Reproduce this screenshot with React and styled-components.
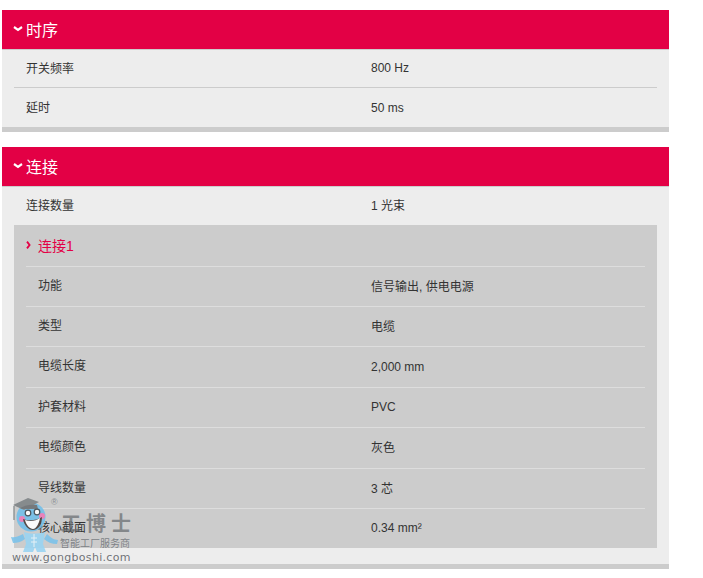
import styled, { createGlobalStyle } from 'styled-components'

const GlobalStyle = createGlobalStyle`
  html, body {
    margin: 0;
    padding: 0;
    background: #fff;
    font-family: "Liberation Sans", "Noto Sans CJK SC", sans-serif;
  }
  * {
    box-sizing: border-box;
  }
`

const Page = styled.div`
  position: relative;
  width: 703px;
  height: 578px;
  overflow: hidden;
  padding: 10px 34px 0 2px;
`

const Section = styled.section`
  background: #ededed;
  border-bottom: 5px solid #ccc;
  margin-bottom: 15px;
`

const Header = styled.h2`
  display: flex;
  align-items: center;
  gap: 3px;
  height: 40px;
  margin: 0;
  padding: 0 0 2px 11px;
  background: #e30045;
  border-bottom: 1px solid #ccc;
  color: #fff;
  font-size: 16px;
  font-weight: 400;
`

const Row = styled.div`
  display: flex;
  align-items: center;
  height: ${(p) => p.$h}px;
  margin: 0 12px;
  padding: 0 0 ${(p) => p.$pad ?? 2}px 12px;
  font-size: 12px;
  color: #333;
  border-bottom: ${(p) => (p.$line ? '1px solid #ccc' : 'none')};
`

const Label = styled.span`
  width: 345px;
  flex: none;
`

const Value = styled.span`
  padding-top: ${(p) => (p.$latin ? 2 : 0)}px;
`

const Nested = styled.div`
  background: #ccc;
  margin: 0 12px 16px;
`

const NestedTitle = styled.div`
  display: flex;
  align-items: center;
  gap: 7px;
  height: 42px;
  margin: 0 12px;
  padding-bottom: 2px;
  border-bottom: 1px solid #ddd;
  color: #e30045;
  font-size: 14px;
`

const NestedRow = styled.div`
  display: flex;
  align-items: center;
  height: ${(p) => p.$h}px;
  margin: 0 12px;
  padding: 0 0 3px 12px;
  border-bottom: ${(p) => (p.$last ? 'none' : '1px solid #ddd')};
  font-size: 12px;
  color: #333;
`

const NestedLabel = styled.span`
  width: 333px;
  flex: none;
  padding-bottom: 2px;
`

const Watermark = styled.div`
  position: absolute;
  left: 10px;
  top: 496px;
  width: 125px;
  height: 72px;
  pointer-events: none;
`

const BrandName = styled.div`
  position: absolute;
  left: 51px;
  top: 13px;
  font-family: "Noto Sans CJK SC", sans-serif;
  font-size: 20px;
  font-weight: 700;
  letter-spacing: 5px;
  line-height: 28px;
  white-space: nowrap;
  color: rgba(100, 104, 108, 0.7);
`

const BrandTag = styled.div`
  position: absolute;
  left: 50px;
  top: 41px;
  font-family: "Noto Sans CJK SC", sans-serif;
  font-size: 10px;
  line-height: 12px;
  white-space: nowrap;
  color: rgba(110, 115, 120, 0.85);
`

const BrandUrl = styled.div`
  position: absolute;
  left: 2px;
  top: 55px;
  font-family: "DejaVu Sans", sans-serif;
  font-size: 11px;
  line-height: 14px;
  letter-spacing: 0.3px;
  white-space: nowrap;
  color: rgba(95, 100, 105, 0.9);
`

const Registered = styled.div`
  position: absolute;
  left: 41px;
  top: 1px;
  font-size: 9px;
  line-height: 10px;
  color: rgba(120, 125, 130, 0.8);
`

const MascotSvg = styled.svg`
  position: absolute;
  left: 0;
  top: 0;
  opacity: 0.9;
`

const Chevron = () => (
  <svg width="10" height="6" viewBox="0 0 10 6">
    <path d="M1 1l4 2.8L9 1" fill="none" stroke="#fff" strokeWidth="2.2" />
  </svg>
)

const SmallChevron = () => (
  <svg width="5" height="8" viewBox="0 0 5 8">
    <path d="M1 .6l2.6 3.4L1 7.4" fill="none" stroke="#e30045" strokeWidth="1.8" />
  </svg>
)

const Mascot = () => (
  <MascotSvg width="50" height="58" viewBox="0 0 50 58">
    <path d="M1 41c4 1 8-1 12-3l2 5c-4 3-8 4-12 4z" fill="#7cc3ea" />
    <path d="M48 44c-4 0-8-3-11-6l-3 5c3 3 8 5 13 5z" fill="#7cc3ea" />
    <path d="M14 36c6 2 14 2 21 0l-2 12 3 8h-9l-2-5-2 5h-10l3-8z" fill="#9ad4f2" />
    <path d="M24 38v13M21 42h6M21 46h6" stroke="#e8f5fb" strokeWidth="1" fill="none" />
    <path d="M4 10v14" stroke="#8a8f91" strokeWidth="1.5" fill="none" />
    <circle cx="21" cy="21" r="14.5" fill="#73bfe9" />
    <path d="M3 9L18 2l11 4-15 8z" fill="#7f8487" />
    <path d="M10 12c5-3 11-4 17-3l1 4H12z" fill="#6c7174" />
    <circle cx="12" cy="23" r="3" fill="#ee7ab8" />
    <circle cx="32" cy="20" r="3" fill="#ee7ab8" />
    <circle cx="18" cy="17" r="2.8" fill="#fff" stroke="#3e4a52" strokeWidth="1.2" />
    <circle cx="27" cy="16" r="2.8" fill="#fff" stroke="#3e4a52" strokeWidth="1.2" />
    <path d="M13 23c5 2 13 2 19-2 0 8-4 13-9 13s-9-5-10-11z" fill="#4a3f3b" />
    <path d="M15 24c5 2 11 1 15-2-1 6-4 11-7 11s-7-4-8-9z" fill="#fff" />
  </MascotSvg>
)

const timing = [
  ['开关频率', '800 Hz', 38],
  ['延时', '50 ms', 39],
]

const cable = [
  ['功能', '信号输出, 供电电源', 40],
  ['类型', '电缆', 40],
  ['电缆长度', '2,000 mm', 41, true],
  ['护套材料', 'PVC', 40, true],
  ['电缆颜色', '灰色', 41],
  ['导线数量', '3 芯', 40],
  ['核心截面', '0.34 mm²', 39, true],
]

function App() {
  return (
    <Page>
      <GlobalStyle />
      <Section>
        <Header>
          <Chevron />
          时序
        </Header>
        {timing.map(([label, value, h], i) => (
          <Row key={label} $h={h} $line={i === 0}>
            <Label>{label}</Label>
            <Value $latin={i === 1}>{value}</Value>
          </Row>
        ))}
      </Section>
      <Section>
        <Header>
          <Chevron />
          连接
        </Header>
        <Row $h={38} $pad={4}>
          <Label>连接数量</Label>
          <Value>1 光束</Value>
        </Row>
        <Nested>
          <NestedTitle>
            <SmallChevron />
            连接1
          </NestedTitle>
          {cable.map(([label, value, h, latin], i) => (
            <NestedRow key={label} $h={h} $last={i === cable.length - 1}>
              <NestedLabel>{label}</NestedLabel>
              <Value $latin={latin}>{value}</Value>
            </NestedRow>
          ))}
        </Nested>
      </Section>
      <Watermark>
        <Mascot />
        <Registered>®</Registered>
        <BrandName>工博士</BrandName>
        <BrandTag>智能工厂服务商</BrandTag>
        <BrandUrl>www.gongboshi.com</BrandUrl>
      </Watermark>
    </Page>
  )
}

export default App
